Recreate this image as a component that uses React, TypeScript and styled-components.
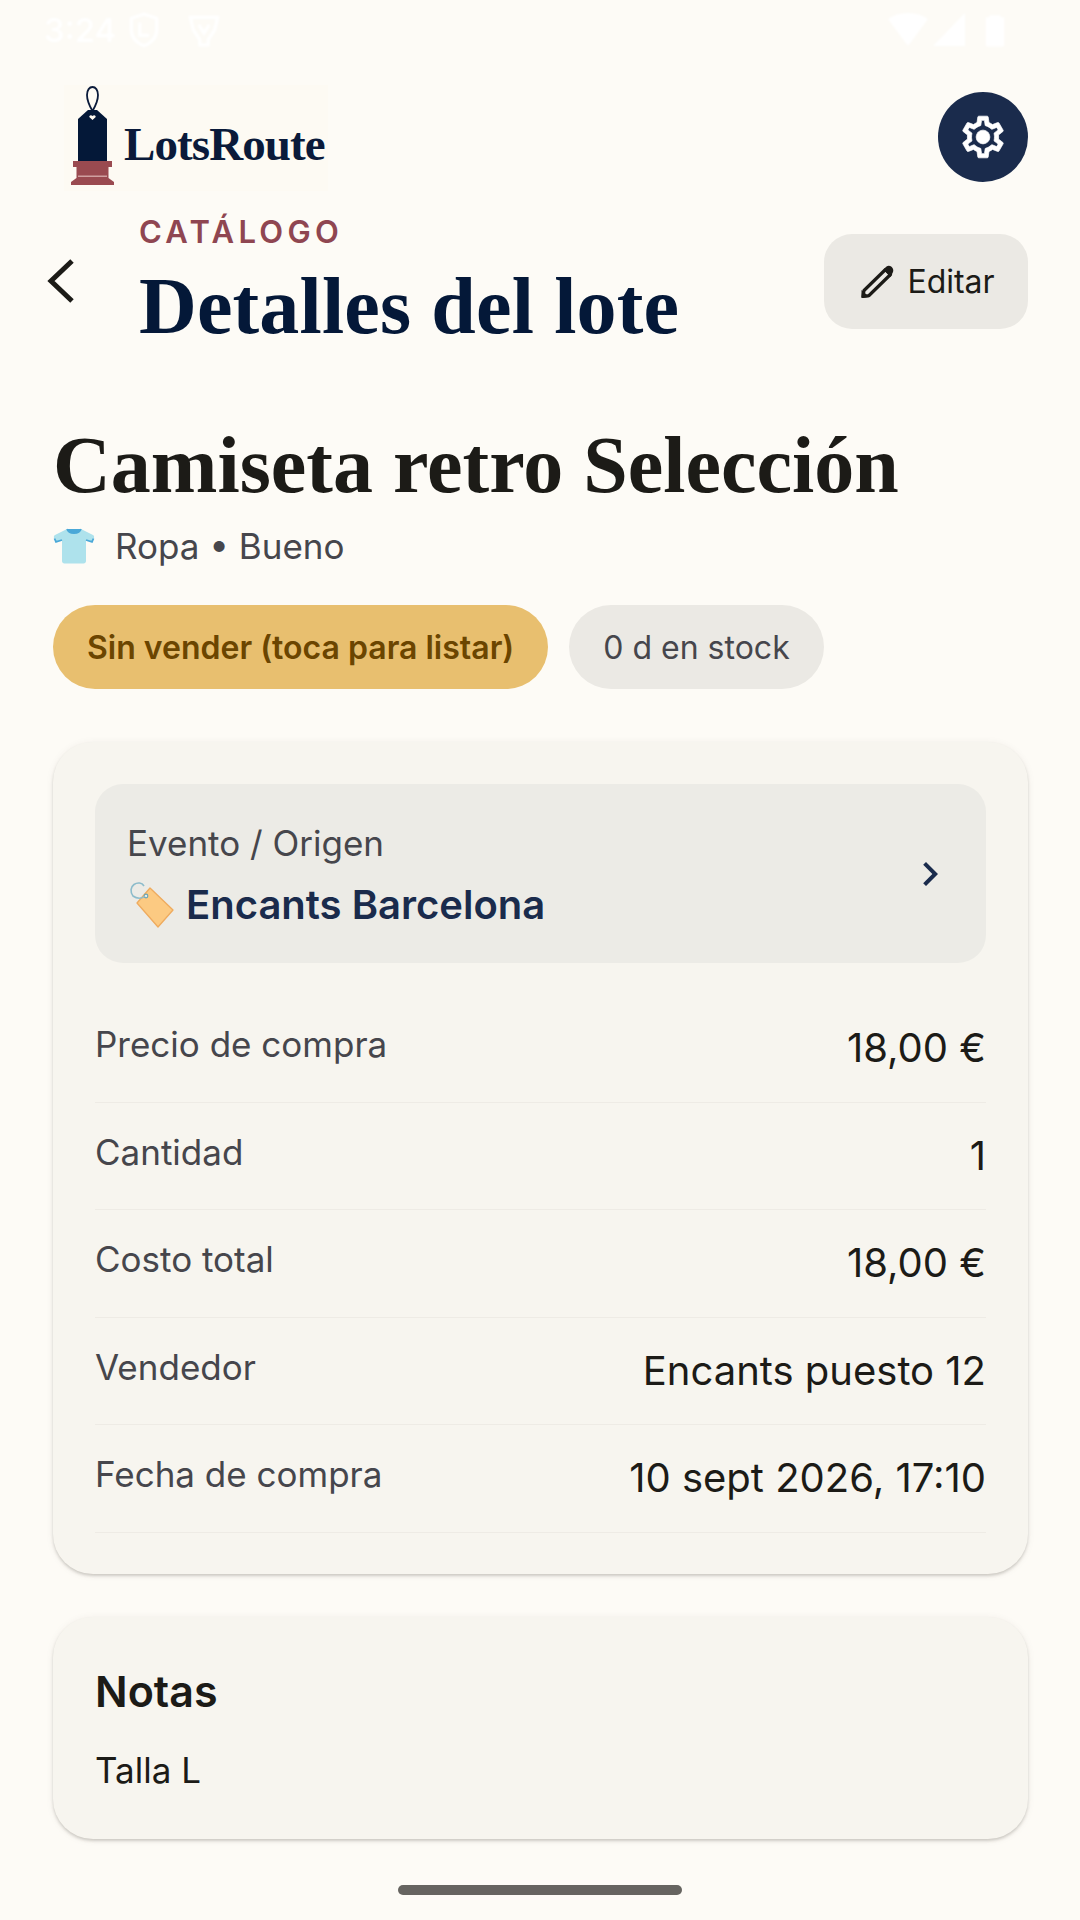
import React from "react";
import styled, { createGlobalStyle } from "styled-components";

const Global = createGlobalStyle`
  html, body { margin: 0; padding: 0; background: #fdfbf6; }
  * { box-sizing: border-box; }
`;

const Page = styled.div`
  width: 1080px;
  height: 1920px;
  overflow: hidden;
  background: #fdfbf6;
  font-family: Inter, "Liberation Sans", sans-serif;
  color: #1c1b17;
  display: flex;
  flex-direction: column;
`;

const StatusBar = styled.div`
  height: 60px;
  padding: 0 74px 0 44px;
  display: flex;
  align-items: center;
  justify-content: space-between;
  color: #ffffff;
  flex: none;
  filter: blur(1px);
`;
const StatusLeft = styled.div`
  display: flex;
  align-items: center;
  gap: 12px;
  font-size: 33px;
  font-weight: 500;
`;
const StatusRight = styled.div`
  display: flex;
  align-items: center;
  gap: 5px;
`;

const TopBar = styled.header`
  height: 122px;
  padding: 22px 52px 0 64px;
  display: flex;
  align-items: flex-start;
  justify-content: space-between;
  flex: none;
`;
const Logo = styled.div`
  display: flex;
  align-items: flex-end;
  gap: 8px;
  width: 264px;
  height: 106px;
  margin-top: 3px;
  padding: 0 0 5px 6px;
  background: #fdfaf3;
`;
const LogoText = styled.span`
  font-family: "Liberation Serif", serif;
  font-weight: 700;
  font-size: 47px;
  line-height: 1;
  color: #0a1a3a;
  margin-bottom: 18px;
  letter-spacing: -0.9px;
`;
const GearButton = styled.button`
  width: 90px;
  height: 90px;
  margin-top: 10px;
  border: none;
  border-radius: 50%;
  background: #1a2b4c;
  display: flex;
  align-items: center;
  justify-content: center;
  padding: 0;
`;

const TitleRow = styled.div`
  padding: 0 52px 0 46px;
  display: flex;
  align-items: flex-start;
  flex: none;
`;
const BackButton = styled.div`
  width: 93px;
  height: 60px;
  margin-top: 75px;
  flex: none;
`;
const TitleBlock = styled.div`
  flex: 1;
  padding-top: 32px;
`;
const Eyebrow = styled.div`
  font-size: 31px;
  font-weight: 600;
  letter-spacing: 4.3px;
  line-height: 36px;
  color: #8f4651;
`;
const PageTitle = styled.h1`
  margin: 8px 0 0;
  font-family: "Liberation Serif", serif;
  font-weight: 700;
  font-size: 80px;
  line-height: 96px;
  letter-spacing: 0.15px;
  color: #041838;
`;
const EditButton = styled.button`
  width: 204px;
  height: 95px;
  margin-top: 52px;
  border: none;
  border-radius: 28px;
  background: #ebe9e4;
  display: flex;
  align-items: center;
  justify-content: center;
  gap: 12px;
  font-family: inherit;
  font-size: 32px;
  color: #1c1b17;
  flex: none;
  padding: 0 0 0 2px;
`;

const Main = styled.main`
  padding: 0 52px 0 53px;
  display: flex;
  flex-direction: column;
  flex: 1;
`;
const ItemTitle = styled.h2`
  margin: 63px 0 0;
  font-family: "Liberation Serif", serif;
  font-weight: 700;
  font-size: 80px;
  line-height: 96px;
  color: #1c1b17;
`;
const MetaRow = styled.div`
  display: flex;
  align-items: center;
  gap: 20px;
  margin-top: 9px;
  font-size: 35px;
  line-height: 48px;
  color: #46464c;
`;
const Chips = styled.div`
  display: flex;
  gap: 21px;
  margin-top: 35px;
`;
const Chip = styled.div<{ $primary?: boolean }>`
  height: 84px;
  padding: 0 34px;
  border-radius: 42px;
  display: flex;
  align-items: center;
  font-size: 32px;
  font-weight: ${(p) => (p.$primary ? 600 : 400)};
  background: ${(p) => (p.$primary ? "#e8bf6f" : "#ebe9e4")};
  color: ${(p) => (p.$primary ? "#6b4500" : "#46464c")};
`;

const Card = styled.section`
  background: #f7f5ef;
  border-radius: 40px;
  padding: 42px;
  box-shadow: 0 2px 3px rgba(60, 55, 45, 0.22), 0 1px 8px rgba(60, 55, 45, 0.06);
`;
const DetailsCard = styled(Card)`
  margin-top: 53px;
  height: 832px;
`;
const NotesCard = styled(Card)`
  margin-top: 43px;
  height: 222px;
`;
const EventBox = styled.div`
  height: 179px;
  border-radius: 28px;
  background: #ecebe6;
  padding: 4px 32px 0;
  display: flex;
  align-items: center;
  justify-content: space-between;
`;
const EventLabel = styled.div`
  font-size: 35px;
  line-height: 48px;
  color: #46464c;
`;
const EventName = styled.div`
  display: flex;
  align-items: center;
  gap: 11px;
  margin-top: 10px;
  margin-left: 2px;
  font-size: 40px;
  font-weight: 600;
  line-height: 56px;
  color: #1a2b4c;
`;
const ChevronWrap = styled.div`
  display: flex;
  margin-top: -4px;
`;
const Row = styled.div`
  height: 107.5px;
  display: flex;
  align-items: center;
  justify-content: space-between;
  border-bottom: 1.5px solid #eeebe5;
`;
const RowLabel = styled.span`
  font-size: 35px;
  line-height: 48px;
  color: #46464c;
  position: relative;
  top: -4px;
`;
const RowValue = styled.span`
  font-size: 40px;
  line-height: 56px;
  color: #1c1b17;
`;
const Rows = styled.div`
  margin-top: 32px;
`;
const NotesTitle = styled.div`
  font-size: 43px;
  font-weight: 600;
  line-height: 56px;
  margin-top: 4px;
`;
const NotesBody = styled.div`
  font-size: 35px;
  line-height: 48px;
  margin-top: 27px;
`;
const HomeBar = styled.div`
  width: 284px;
  height: 10px;
  border-radius: 5px;
  background: #666460;
  margin: 46px auto 26px;
  flex: none;
`;

const rows: [string, string][] = [
  ["Precio de compra", "18,00 €"],
  ["Cantidad", "1"],
  ["Costo total", "18,00 €"],
  ["Vendedor", "Encants puesto 12"],
  ["Fecha de compra", "10 sept 2026, 17:10"],
];

const TagIcon = () => (
  <svg width="46" height="100" viewBox="0 0 46 100" style={{ display: "block" }}>
    <path d="M22.500 25C19 19 17 14 17 9c0-5 2.500-8 5.500-8s5.500 3 5.500 8c0 5-2 10-5.500 16z" fill="none" stroke="#0a1a3a" strokeWidth="1.800" />
    <path d="M18 24h9l10 9v42H8V33z" fill="#041838" />
    <path d="M22.500 34l-3-2.800c-1-1.500 1.500-3 3-1.200 1.500-1.800 4-.3 3 1.200z" fill="#fdf9f1" />
    <path d="M3 75h39v6h-3.500v11l5.500 4v3H1v-3l5.500-4V81H3z" fill="#9a4a50" />
    <path d="M8 89.500h29v1.500H8z" fill="#d0a0a0" />
  </svg>
);

const Gear = () => (
  <svg width="50" height="50" viewBox="0 0 24 24" fill="#fff" stroke="#fff" strokeWidth="0.35">
    <path d="M19.43 12.98c.04-.32.07-.64.07-.98 0-.34-.03-.66-.07-.98l2.11-1.65c.19-.15.24-.42.12-.64l-2-3.46c-.09-.16-.26-.25-.44-.25-.06 0-.12.01-.17.03l-2.49 1c-.52-.4-1.08-.73-1.69-.98l-.38-2.65C14.46 2.18 14.25 2 14 2h-4c-.25 0-.46.18-.49.42l-.38 2.65c-.61.25-1.17.59-1.69.98l-2.49-1c-.06-.02-.12-.03-.18-.03-.17 0-.34.09-.43.25l-2 3.46c-.13.22-.07.49.12.64l2.11 1.65c-.04.32-.07.65-.07.98 0 .33.03.66.07.98l-2.11 1.65c-.19.15-.24.42-.12.64l2 3.46c.09.16.26.25.44.25.06 0 .12-.01.17-.03l2.49-1c.52.4 1.08.73 1.69.98l.38 2.65c.03.24.24.42.49.42h4c.25 0 .46-.18.49-.42l.38-2.65c.61-.25 1.17-.59 1.69-.98l2.49 1c.06.02.12.03.18.03.17 0 .34-.09.43-.25l2-3.46c.12-.22.07-.49-.12-.64l-2.11-1.65zm-1.98-1.71c.04.31.05.52.05.73 0 .21-.02.43-.05.73l-.14 1.13.89.7 1.08.84-.7 1.21-1.27-.51-1.04-.42-.9.68c-.43.32-.84.56-1.25.73l-1.06.43-.16 1.13-.2 1.35h-1.4l-.19-1.35-.16-1.13-1.06-.43c-.43-.18-.83-.41-1.23-.71l-.91-.7-1.06.43-1.27.51-.7-1.21 1.08-.84.89-.7-.14-1.13c-.03-.31-.05-.54-.05-.74s.02-.43.05-.73l.14-1.13-.89-.7-1.08-.84.7-1.21 1.27.51 1.04.42.9-.68c.43-.32.84-.56 1.25-.73l1.06-.43.16-1.13.2-1.35h1.39l.19 1.35.16 1.13 1.06.43c.43.18.83.41 1.23.71l.91.7 1.06-.43 1.27-.51.7 1.21-1.07.85-.89.7.14 1.13z" />
    <circle cx="12" cy="12" r="3.300" />
  </svg>
);

const Pencil = () => (
  <svg width="36" height="36" viewBox="8 13 36 36" style={{ display: "block" }}>
    <path d="M13 39.500 34.500 18.500 39.500 23.500 18 44.500 12 45.500z" fill="none" stroke="#1c1b17" strokeWidth="3.200" strokeLinejoin="round" />
    <path d="M32.500 18.500 35.500 15.500c1.500-1.200 3.500-1 5 .3 1.700 1.500 2.400 3.800 1.300 5.700L39.500 26z" fill="#1c1b17" />
    <path d="M10.500 47v-8l8 7.200z" fill="#1c1b17" />
  </svg>
);

const Back = () => (
  <svg width="34" height="48" viewBox="0 0 34 48" style={{ display: "block" }}>
    <path d="M26 4 5 24l21 20" fill="none" stroke="#1c1b17" strokeWidth="5" />
  </svg>
);

const ChevronRight = () => (
  <svg width="48" height="48" viewBox="0 0 24 24" fill="#1a2b4c" style={{ display: "block" }}>
    <path d="M10 6 8.590 7.410 13.170 12l-4.580 4.590L10 18l6-6z" />
  </svg>
);

const Shirt = () => (
  <svg width="42" height="38" viewBox="0 0 42 38">
    <path d="M14 2 2 8c-1 .6-1.400 1.800-1 2.800l1.800 3.800 6.200-1.800V34c0 1.400 1 2.400 2.400 2.400h19.200c1.400 0 2.400-1 2.400-2.400V12.800l6.200 1.800 1.800-3.800c.4-1 0-2.200-1-2.800L28 2c-1.500 3-12.500 3-14 0z" fill="#aee2ec" />
    <path d="M14 2c1.500 5.500 12.500 5.500 14 0" fill="#4aa8d8" stroke="#4aa8d8" strokeWidth="1.500" />
    <path d="M1.500 11.500 3 14.800 9 13" fill="none" stroke="#4aa8d8" strokeWidth="1.800" />
    <path d="M40.500 11.500 39 14.800 33 13" fill="none" stroke="#4aa8d8" strokeWidth="1.800" />
  </svg>
);

const Tag = () => (
  <svg width="46" height="50" viewBox="9 5 46 50" style={{ display: "block" }}>
    <path d="M17 28 30 13l23 22-15 17z" fill="#fcca82" stroke="#efab5e" strokeWidth="1.300" strokeLinejoin="round" />
    <circle cx="26" cy="21" r="1.800" fill="#e8eef0" stroke="#6aa5b5" strokeWidth="1.200" />
    <path d="M25 21C22 24 17 24 13 21 10 17 10.500 12 14 9.500c3.500-2.500 8-2 10 1.500" fill="none" stroke="#8dbccb" strokeWidth="1.600" />
  </svg>
);

const StatusIcons = () => (
  <>
    <svg width="40" height="34" viewBox="0 0 40 34" fill="#fff"><path d="M0 6c11-8 29-8 40 0L20 33z" /></svg>
    <svg width="34" height="34" viewBox="0 0 34 34" fill="#fff"><path d="M32 0v33H0z" /></svg>
    <svg width="22" height="36" viewBox="0 0 24 36" fill="#fff" style={{ marginLeft: 12 }}><path d="M6 2h12v2h4v32H2V4h4z" /></svg>
  </>
);

const StatusGlyphs = () => (
  <>
    <svg width="32" height="36" viewBox="0 0 30 34" fill="none" stroke="#fff" strokeWidth="3"><path d="M15 2 27 6v11c0 7-5 12-12 15C8 29 3 24 3 17V6z" /><path d="M11 10v12h9" /></svg>
    <svg width="36" height="36" viewBox="0 0 32 34" fill="none" stroke="#fff" strokeWidth="3" style={{ marginLeft: 14 }}><path d="M3 5h26l-3 12-6 9v5h-8v-5l-6-9zM11 12l5 8 5-8" /></svg>
  </>
);

export default function App() {
  return (
    <Page>
      <Global />
      <StatusBar>
        <StatusLeft>
          3:24
          <StatusGlyphs />
        </StatusLeft>
        <StatusRight>
          <StatusIcons />
        </StatusRight>
      </StatusBar>
      <TopBar>
        <Logo>
          <TagIcon />
          <LogoText>LotsRoute</LogoText>
        </Logo>
        <GearButton>
          <Gear />
        </GearButton>
      </TopBar>
      <TitleRow>
        <BackButton>
          <Back />
        </BackButton>
        <TitleBlock>
          <Eyebrow>CATÁLOGO</Eyebrow>
          <PageTitle>Detalles del lote</PageTitle>
        </TitleBlock>
        <EditButton>
          <Pencil />
          Editar
        </EditButton>
      </TitleRow>
      <Main>
        <ItemTitle>Camiseta retro Selección</ItemTitle>
        <MetaRow>
          <Shirt />
          Ropa • Bueno
        </MetaRow>
        <Chips>
          <Chip $primary>Sin vender (toca para listar)</Chip>
          <Chip>0 d en stock</Chip>
        </Chips>
        <DetailsCard>
          <EventBox>
            <div>
              <EventLabel>Evento / Origen</EventLabel>
              <EventName>
                <Tag />
                Encants Barcelona
              </EventName>
            </div>
            <ChevronWrap>
              <ChevronRight />
            </ChevronWrap>
          </EventBox>
          <Rows>
            {rows.map(([label, value]) => (
              <Row key={label}>
                <RowLabel>{label}</RowLabel>
                <RowValue>{value}</RowValue>
              </Row>
            ))}
          </Rows>
        </DetailsCard>
        <NotesCard>
          <NotesTitle>Notas</NotesTitle>
          <NotesBody>Talla L</NotesBody>
        </NotesCard>
      </Main>
      <HomeBar />
    </Page>
  );
}
